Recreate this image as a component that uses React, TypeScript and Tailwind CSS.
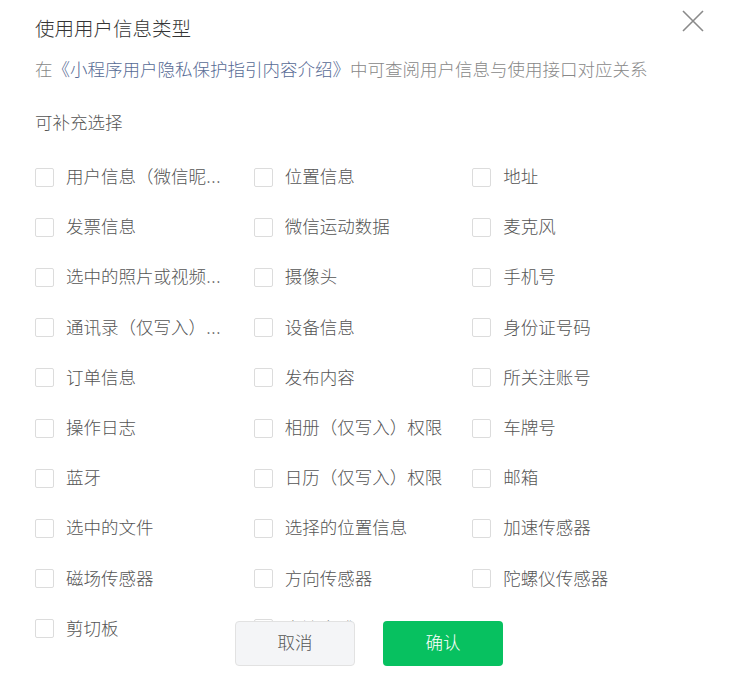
import React from 'react';

const INFO_TYPES = [
  '用户信息（微信昵称、头像）', '位置信息', '地址',
  '发票信息', '微信运动数据', '麦克风',
  '选中的照片或视频信息', '摄像头', '手机号',
  '通讯录（仅写入）权限', '设备信息', '身份证号码',
  '订单信息', '发布内容', '所关注账号',
  '操作日志', '相册（仅写入）权限', '车牌号',
  '蓝牙', '日历（仅写入）权限', '邮箱',
  '选中的文件', '选择的位置信息', '加速传感器',
  '磁场传感器', '方向传感器', '陀螺仪传感器',
  '剪切板', '交流方式',
];

export default function App() {
  return (
    <div className="relative h-[695px] w-[731px] overflow-hidden bg-white font-['Inter','Noto_Sans_CJK_SC',sans-serif] font-light">
      {/* Close */}
      <button className="absolute right-[27px] top-[10px] h-[22px] w-[22px]" aria-label="关闭">
        <svg viewBox="0 0 22 22" className="h-[22px] w-[22px]" fill="none" stroke="#8a8a8a" strokeWidth="1.6">
          <path d="M1 1L21 21M21 1L1 21" />
        </svg>
      </button>

      <div className="pl-[35px] pt-[15px]">
        <h2 className="text-[19.5px] leading-[28px] text-[#353535]">使用用户信息类型</h2>
        <p className="mt-[13px] text-[17.5px] leading-[28px] text-[#888]">
          在<span className="text-[#576b95]">《小程序用户隐私保护指引内容介绍》</span>中可查阅用户信息与使用接口对应关系
        </p>
        <p className="mt-[25px] text-[17.5px] leading-[28px] text-[#555]">可补充选择</p>

        {/* Options */}
        <div className="mt-[15px] grid w-[656px] grid-cols-3">
          {INFO_TYPES.map(item => (
            <label key={item} className="flex h-[50.2px] items-center gap-3 pr-[29px]">
              <span className="h-[19px] w-[19px] shrink-0 rounded-[2px] border border-[#dcdcdc] bg-white" />
              <span className="truncate text-[17.5px] leading-[26px] text-[#555]">{item}</span>
            </label>
          ))}
        </div>
      </div>

      {/* Footer buttons */}
      <div className="absolute left-0 right-0 top-[621px] flex justify-center gap-[28px] pl-[7px]">
        <button className="h-[45px] w-[120px] rounded-[4px] border border-[#e2e2e2] bg-[#f4f5f7] text-[17.5px] text-[#555]">
          取消
        </button>
        <button className="h-[45px] w-[120px] rounded-[4px] bg-[#07c160] text-[17.5px] text-white">
          确认
        </button>
      </div>
    </div>
  );
}
